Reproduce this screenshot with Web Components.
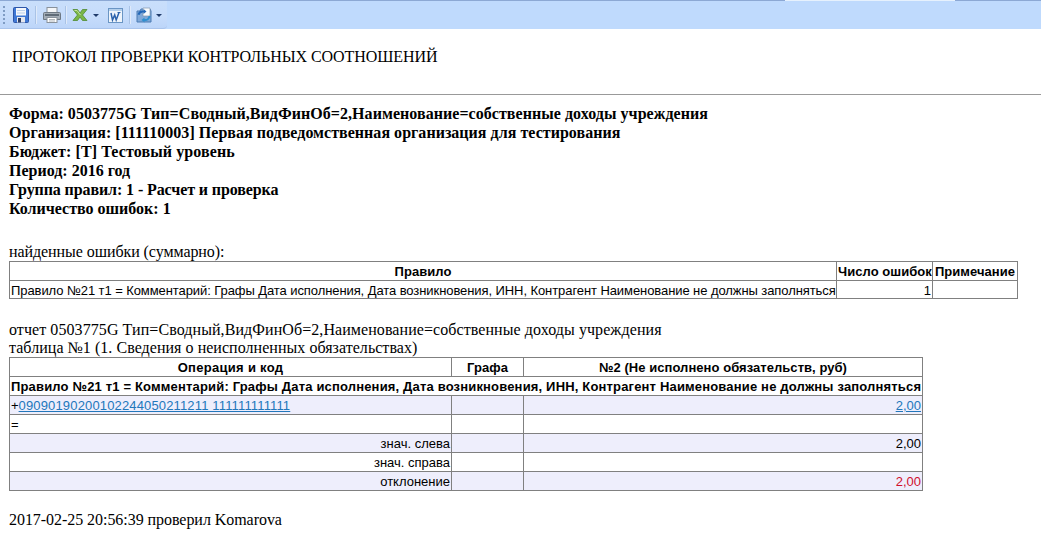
<!DOCTYPE html>
<html><head><meta charset="utf-8"><style>
html,body{margin:0;padding:0;background:#fff;width:1041px;height:550px;overflow:hidden}
</style></head><body>
<report-toolbar></report-toolbar>
<report-page>
  <report-title>ПРОТОКОЛ ПРОВЕРКИ КОНТРОЛЬНЫХ СООТНОШЕНИЙ</report-title>
  <report-summary>
    <div style="letter-spacing:.05px">Форма: 0503775G Тип=Сводный,ВидФинОб=2,Наименование=собственные доходы учреждения</div>
    <div style="letter-spacing:.03px">Организация: [111110003] Первая подведомственная организация для тестирования</div>
    <div style="letter-spacing:.1px">Бюджет: [T] Тестовый уровень</div>
    <div>Период: 2016 год</div>
    <div style="letter-spacing:-.1px">Группа правил: 1 - Расчет и проверка</div>
    <div>Количество ошибок: 1</div>
  </report-summary>
  <report-caption style="margin-top:24px;letter-spacing:-.07px">найденные ошибки (суммарно):</report-caption>
  <report-table rows="19px 18px" cols="827px 96px 84px" style="width:1009px">
    <report-cell head>Правило</report-cell><report-cell head>Число ошибок</report-cell><report-cell head last>Примечание</report-cell>
    <report-cell tight>Правило №21 т1 = Комментарий: Графы Дата исполнения, Дата возникновения, ИНН, Контрагент Наименование не должны заполняться</report-cell><report-cell right>1</report-cell><report-cell last></report-cell>
  </report-table>
  <report-caption style="margin-top:21px;height:18px;letter-spacing:.075px">отчет 0503775G Тип=Сводный,ВидФинОб=2,Наименование=собственные доходы учреждения</report-caption>
  <report-caption style="letter-spacing:.04px">таблица №1 (1. Сведения о неисполненных обязательствах)</report-caption>
  <report-table rows="repeat(7,19px)" cols="442px 72px 398px" style="width:914px">
    <report-cell head wide>Операция и код</report-cell><report-cell head>Графа</report-cell><report-cell head last>№2 (Не исполнено обязательств, руб)</report-cell>
    <report-cell rule>Правило №21 т1 = Комментарий: Графы Дата исполнения, Дата возникновения, ИНН, Контрагент Наименование не должны заполняться</report-cell>
    <report-cell tint>+<a href="#" style="letter-spacing:.15px">09090190200102244050211211 111111111111</a></report-cell><report-cell tint></report-cell><report-cell tint right last><a href="#">2,00</a></report-cell>
    <report-cell>=</report-cell><report-cell></report-cell><report-cell last></report-cell>
    <report-cell tint right>знач. слева</report-cell><report-cell tint></report-cell><report-cell tint right last>2,00</report-cell>
    <report-cell right>знач. справа</report-cell><report-cell></report-cell><report-cell last></report-cell>
    <report-cell tint right>отклонение</report-cell><report-cell tint></report-cell><report-cell tint right last><span style="color:#d0102e">2,00</span></report-cell>
  </report-table>
  <report-caption style="margin-top:19px;letter-spacing:-.05px">2017-02-25 20:56:39 проверил Komarova</report-caption>
</report-page>
<script>
function def(name, css, html, init){
  customElements.define(name, class extends HTMLElement{
    constructor(){super();const r=this.attachShadow({mode:'open'});r.innerHTML='<style>'+css+'</style>'+html;if(init)init(this,r);}
  });
}
const save=`<svg width="18" height="18" viewBox="0 0 18 18"><path d="M1.500 2.500a1 1 0 0 1 1-1h12l2 2v12a1 1 0 0 1-1 1h-13a1 1 0 0 1-1-1z" fill="#3f78d6" stroke="#2d56a8"/><rect x="4" y="2" width="10" height="7.500" fill="#f4f7fb"/><rect x="5" y="4" width="8" height="1" fill="#bcd0ea"/><rect x="5" y="6.500" width="8" height="1" fill="#bcd0ea"/><rect x="5" y="11" width="8" height="5.500" fill="#e6e8ee"/><rect x="6" y="12" width="3" height="4.500" fill="#2f3f66"/></svg>`;
const print=`<svg width="20" height="18" viewBox="0 0 20 18"><rect x="5" y="1.500" width="10" height="5" fill="#f4f6f8" stroke="#88919b"/><path d="M2.500 6.500h15a1 1 0 0 1 1 1v6h-17v-6a1 1 0 0 1 1-1z" fill="#a3adb7" stroke="#6d7883"/><rect x="3" y="8" width="14" height="2" fill="#5f6b77"/><rect x="5" y="11.500" width="10" height="5" fill="#fff" stroke="#88919b"/><path d="M7 13.500h6M7 15h6" stroke="#b0b7bd"/></svg>`;
const excel=`<svg width="16" height="16" viewBox="0 0 16 16"><path d="M1 2.500h4.500L8 6l2.500-3.500H15L10.500 8l4.500 5.500h-4.500L8 10l-2.500 3.500H1L5.500 8z" fill="#7ab648" stroke="#4f8a32" stroke-width=".8"/><path d="M2.500 3.500h2.500l3.500 4.500" fill="none" stroke="#c4e29a"/></svg>`;
const word=`<svg width="17" height="17" viewBox="0 0 17 17"><rect x="1.500" y="1.500" width="14" height="14" fill="#eef4fb" stroke="#6a95c4"/><rect x="2" y="2" width="13" height="2" fill="#b4cfeb"/><path d="M4 6l1.500 7 2.200-5 1.500 5L12 5.500" fill="none" stroke="#2c62ac" stroke-width="1.500"/><path d="M10.500 5.500h3" stroke="#2c62ac"/></svg>`;
const exportI=`<svg width="18" height="18" viewBox="0 0 18 18"><path d="M2 5h3l1-2h9l1 2v11H2z" fill="#7fa8d8" stroke="#4b7bb3"/><path d="M8 2h7v8H8z" fill="#f8fafc" stroke="#8296ad" stroke-width=".7"/><path d="M2.500 8.500a5.500 5.500 0 0 1 6-4V3l3 2.500-3 2.500V6.500a3.500 3.500 0 0 0-4 2.500z" fill="#2468b8"/><path d="M15.500 10a5.500 5.500 0 0 1-6 5v1.500l-3-2.500 3-2.500V13a3.500 3.500 0 0 0 4-3z" fill="#2f8fd0"/></svg>`;
def('report-toolbar',`
:host{display:block;position:relative;height:29px;background:#bfdafd;box-sizing:border-box}
.bar{display:flex;align-items:center;width:167px;height:29px;padding-top:2px;background:linear-gradient(#c9dffb,#c6dcfb 60%,#bcd5f9);border-bottom:1px solid #a9c4ec;border-radius:0 0 4px 0;box-sizing:border-box;padding-left:3px}
.grip{width:2px;height:18px;margin-right:7px;background:repeating-linear-gradient(#7f9cc4 0 2px,transparent 2px 4px)}
.s{width:1px;height:18px;background:#dfeafa;box-shadow:-1px 0 0 #a9c3e6}
.i{display:flex;align-items:center;justify-content:center}
.a{width:0;height:0;border:3px solid transparent;border-top:3px solid #1f3a6a;border-bottom:0}
.tab{position:absolute;left:785px;top:0;width:170px;height:1px;background:#e6f1fd}
.line{position:absolute;top:0;height:1px;background:#8ca8d4}
`,`<div class="bar"><span class="grip"></span><span class="i">${save}</span><span class="s" style="margin:0 5px 0 6px"></span><span class="i">${print}</span><span class="s" style="margin:0 5px 0 4px"></span><span class="i">${excel}</span><span class="a" style="margin:0 8px 0 5px"></span><span class="i">${word}</span><span class="s" style="margin:0 4px 0 6px"></span><span class="i">${exportI}</span><span class="a" style="margin-left:3px"></span></div><span class="line" style="left:0;width:785px"></span><span class="line" style="left:955px;width:86px"></span><span class="tab"></span>`);
def('report-page',`:host{display:block;padding:0 9px;font:16px/19px "Liberation Serif",serif;color:#000}`,`<slot></slot>`);
def('report-title',`:host{display:block;margin:0 -9px;padding:18px 12px 28px;border-bottom:1px solid #999;line-height:19px;letter-spacing:-.07px}`,`<slot></slot>`);
def('report-summary',`:host{display:block;margin-top:9px;font-weight:bold}::slotted(div){height:19px}`,`<slot></slot>`);
def('report-caption',`:host{display:block;height:19px;white-space:nowrap}`,`<slot></slot>`);
def('report-table',`:host{display:grid;box-sizing:border-box;border:1px solid #808080;border-bottom:0;font:13px/18px "Liberation Sans",sans-serif;color:#000}`,`<slot></slot>`,
 (el)=>{el.style.gridTemplateColumns=el.getAttribute('cols');el.style.gridTemplateRows=el.getAttribute('rows');});
def('report-cell',`
:host{display:block;box-sizing:border-box;padding:1px 1px 0;border-bottom:1px solid #808080;border-right:1px solid #808080;white-space:nowrap;overflow:hidden}
:host([last]){border-right:0}
:host([tight]){letter-spacing:-.08px}
:host([head]){font-weight:bold;text-align:center;letter-spacing:.05px}
:host([wide]){letter-spacing:.3px}
:host([rule]){font-weight:bold;grid-column:1/-1;border-right:0;letter-spacing:.17px}
:host([tint]){background:#eeeefc}
:host([right]){text-align:right}
::slotted(a){color:#2277bb;text-decoration:underline}
`,`<slot></slot>`);
</script>
</body></html>
